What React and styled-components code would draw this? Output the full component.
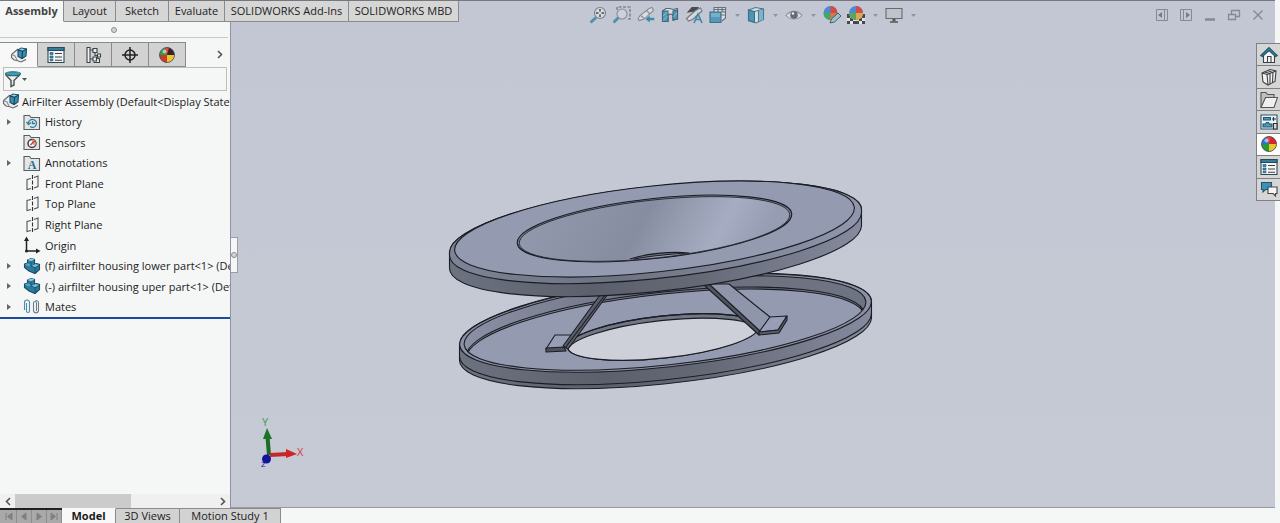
import React from 'react';
import styled, { createGlobalStyle } from 'styled-components';

const GlobalStyle = createGlobalStyle`
	* {
		box-sizing: border-box;
	}

	body {
		margin: 0;
		font-family: "Open Sans", "Noto Sans", sans-serif;
		font-size: 11px;
		color: #1c1c1c;
	}

	button {
		font: inherit;
		color: inherit;
		padding: 0;
		margin: 0;
		border: 0;
		background: none;
	}

	svg {
		display: block;
	}
`;

const Shell = styled.div`
	display: grid;
	grid-template-columns: 230px 1fr 5px;
	grid-template-rows: 22px 1fr 15px;
	height: 100vh;
	overflow: hidden;
	background: #f5f6f6;
`;

/* ---------- command tabs ---------- */

const CommandTabs = styled.nav`
	grid-column: 1 / 3;
	grid-row: 1;
	z-index: 1;
	justify-self: start;
	display: flex;
	height: 22px;
	border-top: 1px solid #77777f;
`;

const CommandTab = styled.button`
	width: ${props => props.$width}px;
	background: ${props => (props.$active ? '#f5f6f6' : '#d6d6d6')};
	border-right: 1px solid #8b8b8b;
	border-bottom: 1px solid ${props => (props.$active ? '#f5f6f6' : '#8b8b8b')};
	font-weight: ${props => (props.$active ? 700 : 400)};
	font-size: 11px;
	line-height: 20px;
	white-space: nowrap;
	color: ${props => (props.$active ? '#444' : '#222')};
`;

/* ---------- feature manager ---------- */

const Sidebar = styled.aside`
	grid-column: 1;
	grid-row: 2;
	display: flex;
	flex-direction: column;
	min-width: 0;
	overflow: hidden;
`;

const Grip = styled.div`
	display: flex;
	align-items: center;
	justify-content: center;
	height: 16px;
	margin: 0 2px 4px 0;
	border-bottom: 1px solid #c9c9c9;
	flex: none;
`;

const GripDot = styled.span`
	width: 6px;
	height: 6px;
	border: 1px solid #8d8d8d;
	border-radius: 50%;
	background: #d4d4d4;
`;

const PanelTabs = styled.div`
	display: flex;
	height: 25px;
	flex: none;
`;

const PanelTab = styled.button`
	display: flex;
	align-items: center;
	justify-content: center;
	width: ${props => (props.$active ? 38 : 37)}px;
	background: ${props => (props.$active ? '#f8f8f8' : '#d2d2d2')};
	border-top: 1px solid #8b8b8b;
	border-right: 1px solid #8b8b8b;
	border-bottom: 1px solid ${props => (props.$active ? '#f8f8f8' : '#8b8b8b')};
`;

const MoreTabs = styled.button`
	display: flex;
	align-items: center;
	justify-content: flex-end;
	flex: 1;
	padding-right: 7px;
`;

const FilterBox = styled.label`
	display: flex;
	align-items: center;
	height: 24px;
	margin: 0 3px;
	border: 1px solid #bdbdbd;
	color: #4a5a60;
	flex: none;
`;

const FilterInput = styled.input`
	flex: 1;
	min-width: 0;
	border: 0;
	outline: 0;
	background: none;
	font: inherit;
`;

const Tree = styled.ul`
	display: grid;
	grid-auto-rows: 1fr;
	height: 228px;
	margin: 0;
	padding: 0;
	list-style: none;
	border-bottom: 2px solid #1d4a9c;
	flex: none;
`;

const TreeRow = styled.li`
	display: flex;
	align-items: center;
	min-width: 0;
	padding-left: ${props => (props.$root ? 2 : 5)}px;
	white-space: nowrap;
	overflow: hidden;
`;

const Expander = styled.span`
	width: 18px;
	flex: none;
`;

const TreeIcon = styled.span`
	width: ${props => (props.$root ? 20 : 22)}px;
	flex: none;
`;

const ScrollBar = styled.div`
	display: flex;
	align-items: center;
	height: 14px;
	margin-top: auto;
	background: #f0f0f0;
	flex: none;
`;

const ScrollArrow = styled.button`
	display: flex;
	align-items: center;
	justify-content: center;
	width: 15px;
	height: 14px;
`;

const ScrollTrack = styled.div`
	flex: 1;
	height: 14px;
`;

const ScrollThumb = styled.div`
	width: 58%;
	height: 14px;
	background: #cbcbcb;
`;

/* ---------- graphics area ---------- */

const Viewport = styled.main`
	grid-column: 2;
	grid-row: 1 / 3;
	position: relative;
	min-width: 0;
	overflow: hidden;
	border-top: 1px solid #77777f;
	border-left: 1px solid #8f93a0;
	border-bottom: 1px solid #999;
	background: linear-gradient(#c3c7d3, #c6cad5);
`;

const TopBar = styled.div`
	display: grid;
	grid-template-columns: 1fr auto 1fr;
	height: 28px;
	align-items: center;
`;

const Hud = styled.div`
	grid-column: 2;
	display: flex;
	opacity: 0.85;
`;

const HudButton = styled.button`
	display: flex;
	align-items: center;
	justify-content: center;
	width: ${props => (props.$narrow ? 14 : 24)}px;
	height: 22px;
	color: #858b98;
`;

const WindowControls = styled.div`
	justify-self: end;
	display: flex;
	padding-right: 5px;
`;

const Scene = styled.svg`
	width: 100%;
	height: auto;
`;

const TriadBox = styled.div`
	position: absolute;
	left: 24px;
	bottom: 38px;
`;

const SplitHandle = styled.button`
	position: absolute;
	left: 0;
	top: 236px;
	display: flex;
	align-items: center;
	justify-content: center;
	width: 7px;
	height: 36px;
	background: #f5f6f6;
	border: 1px solid #9a9da8;
	border-left: 0;
`;

const TaskPane = styled.nav`
	grid-column: 2 / 4;
	grid-row: 1 / 3;
	z-index: 1;
	align-self: start;
	justify-self: end;
	display: flex;
	flex-direction: column;
	width: 24px;
	height: 158px;
	margin-top: 43px;
	border-top: 1px solid #808080;
	border-left: 1px solid #808080;
`;

const TaskButton = styled.button`
	display: flex;
	align-items: center;
	justify-content: center;
	flex: 1;
	background: ${props => (props.$active ? '#fff' : '#d6d6d6')};
	border-bottom: 1px solid #808080;
`;

/* ---------- bottom bar ---------- */

const BottomBar = styled.footer`
	grid-column: 1 / 4;
	grid-row: 3;
	display: flex;
	height: 15px;
`;

const PageButtons = styled.div`
	display: flex;
	width: 62px;
	padding-left: 2px;
	border-top: 2px solid #222;
	background: #a9a9a9;
`;

const PageButton = styled.button`
	display: flex;
	align-items: center;
	justify-content: center;
	width: 15px;
	border-right: 1px solid #8d8d8d;
	color: #808080;
`;

const SheetTab = styled.button`
	width: ${props => props.$width}px;
	background: ${props => (props.$active ? '#f8f8f8' : '#d2d2d2')};
	border-top: 1px solid ${props => (props.$active ? '#f8f8f8' : '#8b8b8b')};
	border-right: 1px solid #8b8b8b;
	font-weight: ${props => (props.$active ? 700 : 400)};
	line-height: 12px;
	white-space: nowrap;
`;

/* ---------- icons ---------- */

const Icon = ({ size = 18, children }) => (
	<svg width={size} height={size} viewBox="0 0 18 18" fill="none" stroke="#3b4145" strokeWidth="1.1" aria-hidden="true">
		{children}
	</svg>
);

const Chevron = ({ left }) => (
	<svg width="6" height="9" viewBox="0 0 6 9" fill="none" stroke="#555" strokeWidth="1.6" aria-hidden="true">
		<path d={left ? 'M5 1 1.500 4.500 5 8' : 'M1 1l3.500 3.500L1 8'} />
	</svg>
);

const DownArrow = () => (
	<svg width="5" height="3" viewBox="0 0 5 3" fill="currentColor" aria-hidden="true">
		<path d="M0 0h5L2.500 3z" />
	</svg>
);

const AssemblyIcon = () => (
	<Icon>
		<path d="M8 3 1.500 8.500v3L4 14l3 .5 4 1.500 5-2.500" fill="#ececec" stroke="#63686c" />
		<path d="M1.500 8.500 5 10l2 4" stroke="#8b8f92" />
		<path d="m8 4 3-2 5.500 1-.5 7-4 2.500-4-2z" fill="#3b8fb5" stroke="#1c4c66" />
		<path d="m8 4 4.500 1.200L12 12.500M12.500 5.200 16.500 3" stroke="#163f56" />
		<path d="m9 3.800 2.500-1.200 3.500.7-2.400 1.200z" fill="#8fd0e6" stroke="none" />
	</Icon>
);

const PropertyIcon = () => (
	<Icon>
		<path d="M1 1.500h16v15H1z" fill="#f4f6f7" stroke="#2f4754" />
		<path d="M1 1.500h16v3H1z" fill="#2f7ea0" stroke="#2f4754" />
		<path d="M3 6.500h3v2H3zM3 10h3v2H3zM3 13.300h3v1.500H3z" fill="#3d93b8" stroke="#205c78" strokeWidth=".7" />
		<path d="M8 7.500h7M8 11h7M8 14.200h7" />
	</Icon>
);

const ConfigIcon = () => (
	<Icon>
		<path d="M3 1.500h3v15H3zM6 4h3M6 13h3" fill="#f4f4f4" />
		<path d="M9 2.500h4v4H9zM11 7v2.500h2M13.500 8h3v3h-3zM9 11h3.500v4H9zM12.500 12l3 1v3.500h-6" fill="#ededed" />
	</Icon>
);

const TargetIcon = () => (
	<Icon>
		<circle cx="9" cy="9" r="5" stroke="#222" strokeWidth="1.5" />
		<path d="M9 1v16M1 9h16" stroke="#222" strokeWidth="1.500" />
	</Icon>
);

const BallIcon = ({ dark }) => (
	<Icon>
		<circle cx="9" cy="9" r="7.500" fill="#3f8ed8" stroke="none" />
		<path d="M9 9V1.500A7.500 7.500 0 0 1 16.500 9z" fill={dark ? '#3a2226' : '#d7262b'} stroke="none" />
		<path d="M9 9 6 2.200A7.500 7.500 0 0 1 11 1.700z" fill="#df4b35" stroke="none" />
		<path d="M1.500 9A7.500 7.500 0 0 0 9 16.500V9z" fill={dark ? '#cf3a26' : '#269b3a'} stroke="none" />
		<path d="M9 9v7.500A7.500 7.500 0 0 0 16.500 9z" fill="#ecc72c" stroke="none" />
		<path d="M2 9a7 7 0 0 1 4-6.500L9 9z" fill={dark ? '#2ba04a' : '#2f72cf'} stroke="none" />
		<circle cx="6.500" cy="5.500" r="2" fill="#fff" opacity=".55" stroke="none" />
		<circle cx="9" cy="9" r="7.500" stroke="#4a4a52" strokeWidth=".8" />
	</Icon>
);

const FunnelIcon = () => (
	<Icon>
		<path d="M1.500 4.500 7 10.500v6l3-1.500v-4.500l6-6" fill="#eef0f0" stroke="#50575a" strokeWidth="1.500" />
		<ellipse cx="9" cy="3.800" rx="7.500" ry="2" fill="#3f9db3" stroke="#245f70" />
	</Icon>
);

const FolderBase = () => (
	<path d="M1 16.500V2.500h5.500l1.500 2h8.500v12z" fill="#e4e5e5" stroke="#595e61" />
);

const HistoryIcon = () => (
	<Icon>
		<FolderBase />
		<path d="M5.500 10a4 4 0 1 1 1.500 3.500M3.500 9l2 2.500L8 9.500M9.500 8v2.500h2.500" stroke="#2f7fa0" strokeWidth="1.300" />
	</Icon>
);

const SensorIcon = () => (
	<Icon>
		<FolderBase />
		<circle cx="9" cy="10.500" r="4" fill="#f7f7f7" stroke="#3b3b3b" strokeWidth="1.500" />
		<path d="M9 10.500v-4a4 4 0 0 1 3 6.500z" fill="#e3a08c" stroke="none" />
		<path d="M7.500 12l4-4" stroke="#c8482c" strokeWidth="1.500" />
	</Icon>
);

const AnnotationIcon = () => (
	<Icon>
		<FolderBase />
		<text x="9" y="15" textAnchor="middle" fontFamily="Liberation Serif, serif" fontWeight="700" fontSize="12" fill="#25718f" stroke="none">A</text>
	</Icon>
);

const PlaneIcon = () => (
	<Icon>
		<path d="M8 4.500 4 5.500v10l4-1M11 3.500 15 2v10.500l-4 1.500" stroke="#555" />
		<path d="M9.500 1v16" stroke="#333" strokeDasharray="4 1.500" />
	</Icon>
);

const OriginIcon = () => (
	<Icon>
		<path d="M3.500 4v11H14" stroke="#222" strokeWidth="1.500" />
		<path d="M3.500.500 6 5H1zM17.500 15 13 12.500v5z" fill="#222" stroke="none" />
		<circle cx="3.500" cy="15" r="1.500" fill="#222" stroke="none" />
	</Icon>
);

const PartIcon = () => (
	<Icon>
		<path d="M1.500 7 4.500 6V3L8 1.500l3.500 1V7l2-.5 3 1v5L12 16.500 6 14l-4.500-3.500z" fill="#2b7b9f" stroke="#1b4c64" />
		<path d="M4.500 3 8 1.500l3.500 1L8 4.200z" fill="#8fcbe0" stroke="none" />
		<path d="M8.500 9l4-2 3.500 1-4 2.500z" fill="#78bdd6" stroke="none" />
		<path d="M1.800 7.200 4.500 6.200 8 8 6 9.500z" fill="#5aa6c4" stroke="none" />
		<path d="M8 4.500V9l4 1.800v5M12 10.800l4.500-2.500" stroke="#1b4c64" strokeWidth=".8" />
	</Icon>
);

const MatesIcon = () => (
	<Icon>
		<path d="M1.500 12V4.500a2.500 2.500 0 0 1 5 0v9M3.500 5v8a1.500 1.500 0 0 0 3 0" stroke="#4f8da5" />
		<path d="M10.500 13V5a1.500 1.500 0 0 1 3 0v8M10.500 13a2.600 2.600 0 0 0 5 0V4.500a2.500 2.500 0 0 0-3-2" stroke="#6b7f88" />
	</Icon>
);

const ZoomFitIcon = () => (
	<Icon>
		<path d="m1.500 16.500 5.500-5" stroke="#3d87a8" strokeWidth="3" />
		<circle cx="11" cy="7" r="5.500" fill="#d9dde3" stroke="#6d7480" />
		<path d="M11 3v2.500M11 8.500V11M7 7h2.500M12.500 7H15" stroke="#333" strokeWidth="1.500" />
	</Icon>
);

const ZoomAreaIcon = () => (
	<Icon>
		<path d="M4 4V1h13v12h-3" stroke="#535965" strokeDasharray="3 1.500" />
		<path d="m.5 16.500 5-5" stroke="#3d87a8" strokeWidth="3" />
		<circle cx="9" cy="8" r="5" fill="#cdd3dc" stroke="#7c838f" />
	</Icon>
);

const PreviousViewIcon = () => (
	<Icon>
		<path d="m1 13 2-3.500L12 2.500l3-1 1.500 3L8 12.500l-5.500 2z" fill="#dfe1e3" stroke="#7b8087" />
		<path d="m3.500 9.500 4 3M9.500 4.500l3.500 3.500" stroke="#7b8087" />
		<path d="M17.500 11.500H13V9l-5 4 5 4v-2.500h4.500z" fill="#287da5" stroke="#c3d6df" strokeWidth=".5" />
	</Icon>
);

const SectionIcon = () => (
	<Icon>
		<path d="M1.500 5 5 2.500h4l3 1 4.500-1v10.500L12 14V9c-2-1.500-3.500-1-5 0v6.500H1.500z" fill="#dce1e5" stroke="#4b5b66" />
		<path d="M1.500 5H7v10.500H1.500zM12 5l4.500-1v9L12 14z" fill="#3a8fb1" stroke="#27556a" />
		<path d="m2 10 4.500-4M2 14.500 6.500 10M12.500 11l3.500-4" stroke="#9acbdc" strokeWidth=".8" />
	</Icon>
);

const DynamicIcon = () => (
	<Icon>
		<path d="M3 6 7 1.500h6L10.500 5z" fill="#33363b" stroke="#33363b" />
		<path d="m1.500 12.500 9-8 5-2.500 1.500 3-9.500 8.500-4 1.500z" fill="#d8dadd" stroke="#666b72" />
		<path d="m9 17 4-9 4 9M10.500 13.500h5" stroke="#2c7da0" strokeWidth="1.600" />
	</Icon>
);

const OrientationIcon = () => (
	<Icon>
		<path d="M5 6V1.500h11.500V12L13 15M5 3.500h11.500M9 1.500V6M13 2v4h3.500M12 9h4.500" fill="#dce1e6" stroke="#59616b" />
		<path d="M1 6h11v10.500H1z" fill="#4291b3" stroke="#27617d" />
		<path d="M2 7h9v4H2z" fill="#69acc7" stroke="none" />
	</Icon>
);

const DisplayStyleIcon = () => (
	<Icon>
		<path d="m1.500 4 7-2.500L16.500 3v10.500L9 17l-7.500-2.500z" fill="#d8e8ee" stroke="#3d6a80" />
		<path d="m1.500 4 6 1.500V16.300l-6-1.800z" fill="#3b8bad" stroke="#27617d" />
		<path d="m7.500 5.500 9-2.500M11.500 4.500v11.500" stroke="#3d6a80" />
		<path d="m12 5 4-1.500v9.500l-4 2z" fill="#6db1cb" stroke="none" />
	</Icon>
);

const EyeIcon = () => (
	<Icon>
		<path d="M1 9.500C5 4 13 4 17 9.500 13 14 5 14 1 9.500z" fill="#dfe2e6" stroke="#848a94" />
		<circle cx="9" cy="9" r="3.800" fill="#555b65" stroke="none" />
		<circle cx="8" cy="7.500" r="1.200" fill="#fff" stroke="none" />
	</Icon>
);

const EditAppearanceIcon = () => (
	<svg width="20" height="20" viewBox="0 0 20 20" aria-hidden="true">
		<circle cx="8.500" cy="8" r="7" fill="#3b7fd1" />
		<path d="M8.500 8V1a7 7 0 0 1 7 7z" fill="#d8362e" />
		<path d="M1.500 8a7 7 0 0 0 7 7V8z" fill="#37a04a" />
		<path d="M8.500 8v7a7 7 0 0 0 7-7z" fill="#d86b2c" />
		<path d="m8 18 1.500-4L16 8l3 3-6.500 6z" fill="#8cc1d5" stroke="#3b4b55" />
	</svg>
);

const ApplySceneIcon = () => (
	<svg width="20" height="20" viewBox="0 0 20 20" aria-hidden="true">
		<path d="M1 9h18v10H1z" fill="#e9e9e9" />
		<path d="M1 9h3v4H1zM16 9h3v4h-3zM4 13h3v3H4zM13 13h3v3h-3zM1 16h3v3H1zM7 16h6v3H7zM16 16h3v3h-3z" fill="#333" />
		<circle cx="10" cy="8" r="7" fill="#3b7fd1" />
		<path d="M10 8V1a7 7 0 0 1 7 7z" fill="#d8362e" />
		<path d="M3 8a7 7 0 0 0 7 7V8z" fill="#45a349" />
		<path d="M10 8v7a7 7 0 0 0 7-7z" fill="#dfa632" />
	</svg>
);

const MonitorIcon = () => (
	<Icon>
		<path d="M1 2.500h16v10H1z" fill="#bfc4ca" stroke="#555b63" />
		<path d="M7.500 13h3v2.500h-3z" fill="#444" stroke="none" />
		<path d="M5 16h8" stroke="#444" strokeWidth="1.500" />
	</Icon>
);

const WindowIcon = ({ d, fill, width = 1 }) => (
	<svg width="14" height="14" viewBox="0 0 14 14" fill="none" stroke="#858994" strokeWidth={width} aria-hidden="true">
		<path d={d} />
		{fill && <path d={fill} fill="#777b86" stroke="none" />}
	</svg>
);

const HomeIcon = () => (
	<Icon>
		<path d="M3.500 9v7.500h11V9L9 4z" fill="#f7f7f7" />
		<path d="m.8 9.500 8.200-8 8.200 8-1.500 1L9 4.500 2.300 10.500z" fill="#3488aa" stroke="#24556b" />
		<path d="M7.500 16.500V10.500h3.500v6" />
	</Icon>
);

const LibraryIcon = () => (
	<Icon>
		<path d="m2 5 8-3.500 6 1.500-1 10.500L8 17l-5-3z" fill="#f2f2f2" />
		<path d="m2 5 5 1.500L8 17M4.500 4 10 5.500v10.500M7.500 2.800 13 4.300l-.5 10.500M7 6.500 16 3" />
	</Icon>
);

const OpenFolderIcon = () => (
	<Icon>
		<path d="M1 16.500V1.500h5l1.500 2h6.500v3" fill="#bfc0c0" stroke="#555" />
		<path d="m1 16.500 4.500-10h12L14 16.500z" fill="#f0f0f0" stroke="#555" />
	</Icon>
);

const PaletteIcon = () => (
	<Icon>
		<path d="M1 2h16v14H1z" fill="#eef3f5" stroke="#24556b" />
		<path d="M3.500 4.500h7v2.500h-7zM3 14v-3h2.500l1-1.500h2l1 1.500H12v3z" fill="#4a9cbe" stroke="#24556b" />
		<path d="M13.500 4v4M12 6h4M13.500 10.500H17V16h-3.500z" fill="#ddd" stroke="#333" />
	</Icon>
);

const ForumIcon = () => (
	<Icon>
		<path d="M1.500 2.500h10v7h-6L3 12V9.500H1.500z" fill="#3b94b8" stroke="#24556b" />
		<path d="M8 7h9v6.500h-1.500V16L13 13.500H8z" fill="#f6f6f6" stroke="#444" />
	</Icon>
);

/* ---------- model ---------- */

// Both discs share one tilt, so every edge is an ellipse turned by the same angle.
const Edge = ({ cx, cy, rx, ry, ...rest }) => (
	<ellipse cx={cx} cy={cy} rx={rx} ry={ry} transform={`rotate(-6.2 ${cx} ${cy})`} {...rest} />
);

// Side wall swept straight down from a rim.
const wall = (cx, top, bottom) =>
	`M${cx - 206} ${top + 21}A207 44.500 -6.200 0 1 ${cx + 206} ${top - 21}` +
	`V${bottom - 21}A207 44.500 -6.200 0 1 ${cx - 206} ${bottom + 21}Z`;

const AirFilterModel = () => (
	<Scene viewBox="231 29 1044 478" preserveAspectRatio="xMinYMin meet" role="img" aria-label="AirFilter Assembly">
		<defs>
			<linearGradient id="side" x1="0" x2="1">
				<stop offset="0" stopColor="#6d7281" />
				<stop offset=".35" stopColor="#5c606c" />
				<stop offset=".6" stopColor="#656976" />
				<stop offset="1" stopColor="#858a9e" />
			</linearGradient>
			<linearGradient id="fillet" x1="0" x2="1">
				<stop offset="0" stopColor="#7e8496" />
				<stop offset=".4" stopColor="#6e7382" />
				<stop offset="1" stopColor="#9096ac" />
			</linearGradient>
			<linearGradient id="inside" x1="0" x2="1">
				<stop offset="0" stopColor="#8b90a5" />
				<stop offset=".5" stopColor="#6c707f" />
				<stop offset="1" stopColor="#6f7483" />
			</linearGradient>
			<linearGradient id="cone" x1="0" x2="1" y1="0" y2=".15">
				<stop offset="0" stopColor="#949aad" />
				<stop offset=".5" stopColor="#868da0" />
				<stop offset=".65" stopColor="#969db1" />
				<stop offset=".82" stopColor="#a6adc2" />
				<stop offset="1" stopColor="#969db3" />
			</linearGradient>
			<clipPath id="rimClip">
				<Edge cx={665} cy={323} rx={202} ry={42} />
			</clipPath>
			<clipPath id="holeClip">
				<Edge cx={663} cy={337} rx={96} ry={21} />
			</clipPath>
		</defs>

		<g fill="none" stroke="#1b1d24" strokeWidth="1.100" strokeLinejoin="round">
			<path d={wall(665.5, 323, 339)} fill="url(#side)" />
			<path d="M459.500 356A207 44.500 -6.200 0 0 871.500 314" />
			<Edge cx={665.5} cy={323} rx={207} ry={44} fill="#8c91a5" />
			<g clipPath="url(#rimClip)">
				<Edge cx={665} cy={323} rx={203} ry={43} fill="url(#inside)" stroke="none" />
				<Edge cx={665.5} cy={335} rx={200} ry={43} />
				<Edge cx={665.5} cy={337} rx={200} ry={43} fill="#949ab0" />
			</g>
			<Edge cx={665} cy={323} rx={202} ry={42} />
			<Edge cx={663} cy={337} rx={96} ry={21} fill="#717685" />
			<g clipPath="url(#holeClip)">
				<Edge cx={663} cy={341.5} rx={96} ry={21} fill="#cdd0d8" />
			</g>
			<Edge cx={663} cy={337} rx={96} ry={21} />

			<path d="M555 335h17l-8 13-18 1z" fill="#989eb5" />
			<path d="m546 348 18-1 2 4-20 1z" fill="#4c505c" />
			<path d="m600 295 8-1-40 55-5-3z" fill="#5b5f6c" />
			<path d="m605 295-40 53" />

			<path d="M705 284h24l41 33-11 17z" fill="#8f95ab" />
			<path d="m704 285 5-1 51 47-1 4z" fill="#50545f" />
			<path d="m770 317 17-1-9 14-19 2z" fill="#989eb5" />
			<path d="m787 316v4l-8 13-20 2v-3l19-2z" fill="#585c68" />

			<path d={wall(655.5, 231, 247)} fill="url(#side)" />
			<path d="M449.500 252A207 44.500 -6.200 0 1 861.500 210V213A207 44.500 -6.200 0 1 449.500 255Z" fill="url(#fillet)" />
			<Edge cx={654.5} cy={229} rx={201} ry={43} fill="#949ab0" />
			<Edge cx={654.5} cy={228.5} rx={138} ry={30} fill="#7c8296" />
			<Edge cx={654.5} cy={229} rx={136} ry={29} fill="url(#cone)" strokeWidth=".8" />
			<path d="M630 259C645 254 670 251 689 253 672 254 650 256 634 259" fill="#717787" />
		</g>
	</Scene>
);

const Triad = () => (
	<svg width="50" height="54" viewBox="254 414 50 54" aria-hidden="true">
		<path d="M268 454 266.500 436" stroke="#1d6b26" strokeWidth="4" />
		<path d="m266 427 5 11h-9z" fill="#1c7427" />
		<path d="M269 454l18-1" stroke="#c22a2a" strokeWidth="4" />
		<path d="m285 448 11 5-11 4z" fill="#d02323" />
		<circle cx="265.500" cy="458" r="4.500" fill="#14149a" />
		<text x="261" y="425" fontSize="11" fill="#3f9a4a">Y</text>
		<text x="296" y="455" fontSize="11" fill="#d8394a">X</text>
		<text x="260" y="466" fontSize="8" fill="#14149a">Z</text>
	</svg>
);

/* ---------- data ---------- */

const commandTabs = [
	['Assembly', 64],
	['Layout', 52],
	['Sketch', 53],
	['Evaluate', 56],
	['SOLIDWORKS Add-Ins', 124],
	['SOLIDWORKS MBD', 110],
];

const panelTabs = [
	['FeatureManager', <AssemblyIcon />],
	['PropertyManager', <PropertyIcon />],
	['ConfigurationManager', <ConfigIcon />],
	['DimXpertManager', <TargetIcon />],
	['DisplayManager', <BallIcon dark />],
];

const treeItems = [
	{ label: 'History', icon: <HistoryIcon />, open: true },
	{ label: 'Sensors', icon: <SensorIcon /> },
	{ label: 'Annotations', icon: <AnnotationIcon />, open: true },
	{ label: 'Front Plane', icon: <PlaneIcon /> },
	{ label: 'Top Plane', icon: <PlaneIcon /> },
	{ label: 'Right Plane', icon: <PlaneIcon /> },
	{ label: 'Origin', icon: <OriginIcon /> },
	{ label: '(f) airfilter housing lower part<1> (De', icon: <PartIcon />, open: true },
	{ label: '(-) airfilter housing uper part<1> (Def', icon: <PartIcon />, open: true },
	{ label: 'Mates', icon: <MatesIcon />, open: true },
];

const hudItems = [
	['Zoom to Fit', <ZoomFitIcon />],
	['Zoom to Area', <ZoomAreaIcon />],
	['Previous View', <PreviousViewIcon />],
	['Section View', <SectionIcon />],
	['Dynamic Annotation Views', <DynamicIcon />],
	['View Orientation', <OrientationIcon />, true],
	['Display Style', <DisplayStyleIcon />, true],
	['Hide/Show Items', <EyeIcon />, true],
	['Edit Appearance', <EditAppearanceIcon />],
	['Apply Scene', <ApplySceneIcon />, true],
	['View Settings', <MonitorIcon />, true],
];

const windowItems = [
	['Collapse left', 'M1.500 1.500h11v11h-11zM9.500 1.500v11', 'M7 4v6L3 7z'],
	['Collapse right', 'M1.500 1.500h11v11h-11zM4.500 1.500v11', 'M7 4v6l4-3z'],
	['Minimize', 'M2 11.500h10', null, 2.5],
	['Restore', 'M1.500 6.500h7v5h-7zM4.500 6V2.500h8v6H9', null, 1.3],
	['Close', 'm2.500 2.500 9 9M11.500 2.500l-9 9', null, 1.3],
];

const taskItems = [
	['Resources', <HomeIcon />],
	['Design Library', <LibraryIcon />],
	['File Explorer', <OpenFolderIcon />],
	['View Palette', <PaletteIcon />],
	['Appearances', <BallIcon />],
	['Custom Properties', <PropertyIcon />],
	['Forum', <ForumIcon />],
];

const pageItems = [
	['First', 'M2 1v7M8 1 3.500 4.500 8 8z'],
	['Previous', 'M7 1 2.500 4.500 7 8z'],
	['Next', 'M3 1l4.500 3.500L3 8z'],
	['Last', 'M2 1l4.500 3.500L2 8zM8 1v7'],
];

const sheetTabs = [
	['Model', 54],
	['3D Views', 64],
	['Motion Study 1', 101],
];

/* ---------- app ---------- */

const FeatureManager = () => (
	<Sidebar>
		<Grip><GripDot /></Grip>
		<PanelTabs>
			{panelTabs.map(([label, icon], i) => (
				<PanelTab key={label} $active={i === 0} aria-label={label}>{icon}</PanelTab>
			))}
			<MoreTabs aria-label="More tabs"><Chevron /></MoreTabs>
		</PanelTabs>
		<FilterBox>
			<FunnelIcon />
			<DownArrow />
			<FilterInput aria-label="Filter tree" />
		</FilterBox>
		<Tree>
			<TreeRow $root>
				<TreeIcon $root><AssemblyIcon /></TreeIcon>
				AirFilter Assembly (Default&lt;Display State
			</TreeRow>
			{treeItems.map(item => (
				<TreeRow key={item.label}>
					<Expander>
						{item.open && (
							<svg width="7" height="8" viewBox="0 0 7 8" fill="#666" aria-hidden="true">
								<path d="M2 1l4 3-4 3z" />
							</svg>
						)}
					</Expander>
					<TreeIcon>{item.icon}</TreeIcon>
					{item.label}
				</TreeRow>
			))}
		</Tree>
		<ScrollBar>
			<ScrollArrow aria-label="Scroll left"><Chevron left /></ScrollArrow>
			<ScrollTrack><ScrollThumb /></ScrollTrack>
			<ScrollArrow aria-label="Scroll right"><Chevron /></ScrollArrow>
		</ScrollBar>
	</Sidebar>
);

const Graphics = () => (
	<Viewport>
		<TopBar>
			<Hud>
				{hudItems.map(([label, icon, menu]) => (
					<React.Fragment key={label}>
						<HudButton aria-label={label}>{icon}</HudButton>
						{menu && (
							<HudButton $narrow aria-label={`${label} menu`}><DownArrow /></HudButton>
						)}
					</React.Fragment>
				))}
			</Hud>
			<WindowControls>
				{windowItems.map(([label, d, fill, width]) => (
					<HudButton key={label} aria-label={label}>
						<WindowIcon d={d} fill={fill} width={width} />
					</HudButton>
				))}
			</WindowControls>
		</TopBar>
		<AirFilterModel />
		<TriadBox><Triad /></TriadBox>
		<SplitHandle aria-label="Resize panel"><GripDot /></SplitHandle>
	</Viewport>
);

const App = () => (
	<Shell>
		<GlobalStyle />
		<CommandTabs>
			{commandTabs.map(([label, width], i) => (
				<CommandTab key={label} $active={i === 0} $width={width}>{label}</CommandTab>
			))}
		</CommandTabs>
		<FeatureManager />
		<Graphics />
		<TaskPane>
			{taskItems.map(([label, icon]) => (
				<TaskButton key={label} $active={label === 'Appearances'} aria-label={label}>{icon}</TaskButton>
			))}
		</TaskPane>
		<BottomBar>
			<PageButtons>
				{pageItems.map(([label, d]) => (
					<PageButton key={label} aria-label={label}>
						<svg width="10" height="9" viewBox="0 0 10 9" fill="currentColor" stroke="currentColor" aria-hidden="true">
							<path d={d} />
						</svg>
					</PageButton>
				))}
			</PageButtons>
			{sheetTabs.map(([label, width], i) => (
				<SheetTab key={label} $active={i === 0} $width={width}>{label}</SheetTab>
			))}
		</BottomBar>
	</Shell>
);

export default App;
